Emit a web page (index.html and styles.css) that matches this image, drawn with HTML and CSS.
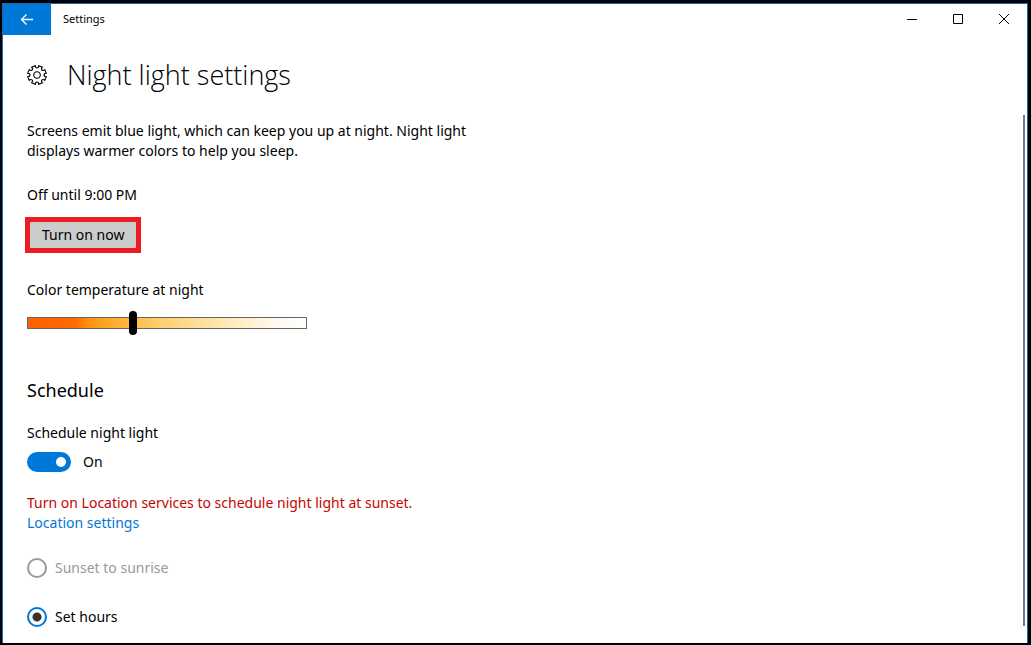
FILE: index.html
```html
<!DOCTYPE html>
<html lang="en">
<head>
  <meta charset="UTF-8">
  <title>Settings</title>
  <meta name="viewport" content="width=device-width, initial-scale=1.0">
  <link rel="stylesheet" href="styles.css">
</head>
<body>
  <div class="window">
    <header class="titlebar">
      <button class="back" aria-label="Back">
        <svg width="14" height="12" viewBox="0 0 14 12"><path d="M13 5.5H1.5M6.5.5l-5 5 5 5"/></svg>
      </button>
      <span class="app-name">Settings</span>
      <div class="window-buttons">
        <button aria-label="Minimize"><svg width="10" height="10" viewBox="0 0 10 10"><path d="M0 5.5h10"/></svg></button>
        <button aria-label="Maximize"><svg width="10" height="10" viewBox="0 0 10 10"><path d="M.5.5h9v9h-9z"/></svg></button>
        <button aria-label="Close"><svg width="10" height="10" viewBox="0 0 10 10"><path d="M0 0l10 10M10 0L0 10"/></svg></button>
      </div>
    </header>

    <div class="view">
      <main class="content">
        <div class="page-title">
          <svg class="gear" width="20" height="20" viewBox="-10 -10 20 20">
            <path d="M-1.7-9.3C-1.6-6.3 1.6-6.3 1.7-9.3L5.37-7.78C3.3-5.6 5.6-3.3 7.78-5.37L9.3-1.7C6.3-1.6 6.3 1.6 9.3 1.7L7.78 5.37C5.6 3.3 3.3 5.6 5.37 7.78L1.7 9.3C1.6 6.3-1.6 6.3-1.7 9.3L-5.37 7.78C-3.3 5.6-5.6 3.3-7.78 5.37L-9.3 1.7C-6.3 1.6-6.3-1.6-9.3-1.7L-7.78-5.37C-5.6-3.3-3.3-5.6-5.37-7.78Z"/>
            <circle r="3.3"/>
          </svg>
          <h1>Night light settings</h1>
        </div>

        <p class="intro">Screens emit blue light, which can keep you up at night. Night light displays warmer colors to help you sleep.</p>

        <p class="status">Off until 9:00 PM</p>
        <button class="turn-on">Turn on now</button>

        <label class="slider-label" for="temperature">Color temperature at night</label>
        <input class="slider" id="temperature" type="range" min="0" max="200" value="75">

        <h2>Schedule</h2>
        <label class="toggle-label" for="schedule">Schedule night light</label>
        <div class="toggle-row">
          <input class="toggle" id="schedule" type="checkbox" role="switch" checked>
          <span>On</span>
        </div>

        <p class="warning">Turn on Location services to schedule night light at sunset.</p>
        <a class="link" href="#">Location settings</a>

        <div class="options">
          <label class="option disabled"><input type="radio" name="hours" disabled>Sunset to sunrise</label>
          <label class="option"><input type="radio" name="hours" checked>Set hours</label>
        </div>
      </main>
      <div class="scrollbar"></div>
    </div>
  </div>
</body>
</html>
```
FILE: styles.css
```css
* {
  box-sizing: border-box;
}

body {
  margin: 0;
  padding: 3px 3px 2px 2px;
  min-height: 100vh;
  display: flex;
  background: #000;
  color: #000;
  font-family: "Noto Sans", "Open Sans", sans-serif;
  font-size: 14px;
  line-height: 20px;
}

h1, h2, p {
  margin: 0;
}

button, input {
  margin: 0;
  padding: 0;
  border: none;
  font: inherit;
}

svg {
  display: block;
  fill: none;
  stroke: #000;
}

.window {
  flex: 1;
  display: flex;
  flex-direction: column;
  background: #fff;
  border: 1px solid #0f6cbd;
  border-bottom: none;
}

.titlebar {
  display: flex;
  height: 31px;
  line-height: 30px;
}

.back {
  display: flex;
  align-items: center;
  justify-content: center;
  width: 48px;
  background: #0078d7;
}

.back svg {
  stroke: #fff;
  stroke-width: 1.3;
}

.app-name {
  margin-left: 12px;
  font-size: 11px;
}

.window-buttons {
  display: flex;
  height: 30px;
  margin-left: auto;
}

.window-buttons button {
  display: flex;
  align-items: center;
  justify-content: center;
  width: 46px;
  background: none;
}

.view {
  flex: 1;
  display: flex;
  justify-content: space-between;
}

.content {
  padding: 20px 0 0 24px;
}

.page-title {
  display: flex;
  align-items: center;
  gap: 20px;
}

h1 {
  font-family: "Open Sans", "Noto Sans", sans-serif;
  font-size: 27px;
  font-weight: 300;
  line-height: 40px;
}

.gear {
  stroke-width: 1.1;
}

.intro {
  max-width: 460px;
  margin-top: 26px;
}

.status {
  margin-top: 24px;
}

.turn-on {
  display: block;
  height: 32px;
  margin-top: 14px;
  padding: 0 15px;
  background: #ccc;
  outline: 5px solid #ed1c24;
  outline-offset: -3px;
}

.slider-label {
  display: block;
  margin-top: 29px;
}

.slider {
  display: block;
  width: 280px;
  height: 24px;
  margin-top: 11px;
  background: none;
  appearance: none;
}

.slider::-webkit-slider-runnable-track {
  height: 12px;
  border: 1px solid #666;
  background: linear-gradient(to right, #ff6000, #ff6a00 17%, #ff9410 22%, #ffb53e 35%, #ffcf70 48%, #ffe6ac 68%, #fffaf0 90%, #fff);
}

.slider::-webkit-slider-thumb {
  width: 8px;
  height: 24px;
  margin-top: -7px;
  border-radius: 4px;
  background: #000;
  appearance: none;
}

h2 {
  margin-top: 42px;
  font-size: 18px;
  font-weight: 400;
  line-height: 26px;
}

.toggle-label {
  display: block;
  margin-top: 20px;
}

.toggle-row {
  display: flex;
  align-items: center;
  gap: 12px;
  margin-top: 9px;
}

.toggle {
  display: flex;
  align-items: center;
  justify-content: flex-end;
  width: 44px;
  height: 20px;
  padding: 0 5px;
  border-radius: 10px;
  background: #0078d7;
  appearance: none;
}

.toggle::before {
  content: "";
  width: 10px;
  height: 10px;
  border-radius: 50%;
  background: #fff;
}

.warning {
  margin-top: 21px;
  color: #c50500;
}

.link {
  color: #0078d7;
  text-decoration: none;
}

.options {
  display: flex;
  flex-direction: column;
  gap: 29px;
  margin-top: 25px;
}

.option {
  display: flex;
  align-items: center;
  gap: 8px;
}

.option input {
  width: 20px;
  height: 20px;
  border: 2px solid #0078d7;
  border-radius: 50%;
  appearance: none;
}

.option input:checked {
  background: radial-gradient(circle, #333 4px, transparent 5px);
}

.disabled {
  color: #999;
}

.option.disabled input {
  border-color: #999;
}

.scrollbar {
  width: 2px;
  margin: 80px 2px 17px 0;
  background: #7a7a7a;
}
```
